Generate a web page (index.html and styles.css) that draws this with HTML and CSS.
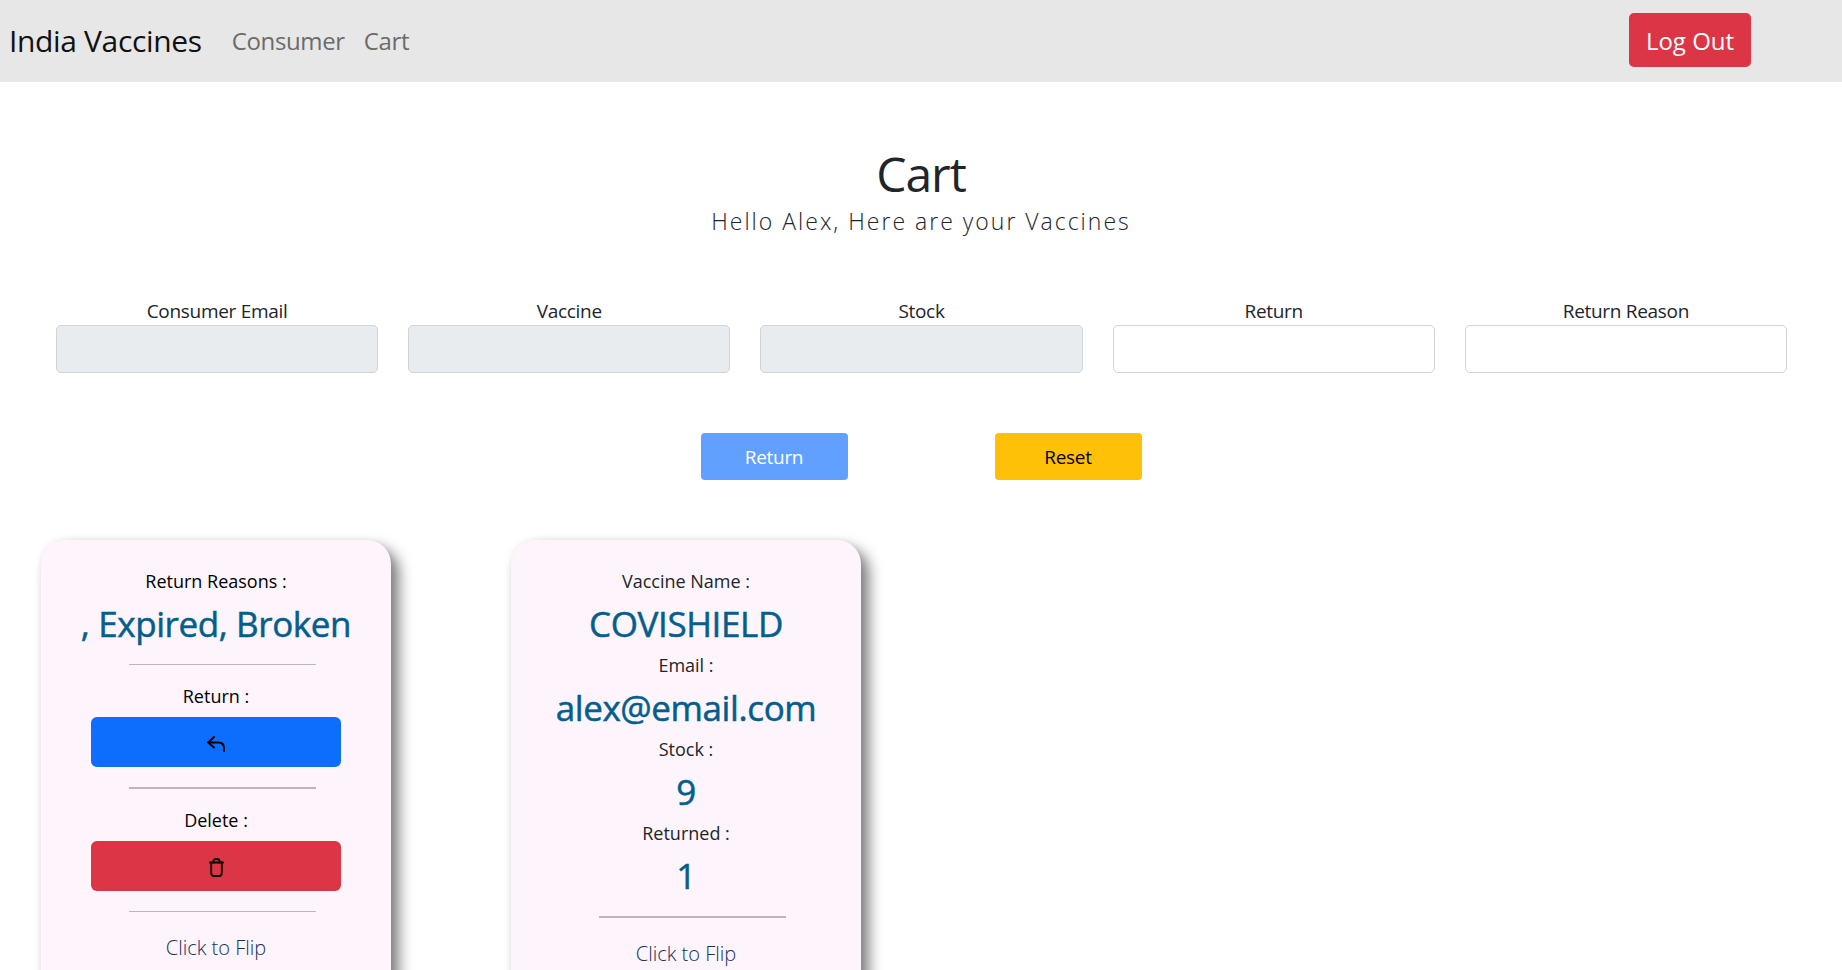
FILE: index.html
```html
<!DOCTYPE html>
<html>
<head>
  <title>India Vaccines</title>
  <link rel="stylesheet" href="styles.css">
</head>
<body>

<nav class="navbar">
  <a class="brand" href="#">India Vaccines</a>
  <a class="nav-link" href="#">Consumer</a>
  <a class="nav-link" href="#">Cart</a>
  <button class="logout">Log Out</button>
</nav>

<h1 class="title">Cart</h1>
<p class="subtitle">Hello Alex, Here are your Vaccines</p>

<form class="return-form">
  <div class="field">
    <label>Consumer Email</label>
    <input type="text" disabled />
  </div>
  <div class="field">
    <label>Vaccine</label>
    <input type="text" disabled />
  </div>
  <div class="field">
    <label>Stock</label>
    <input type="text" disabled />
  </div>
  <div class="field">
    <label>Return</label>
    <input type="text" />
  </div>
  <div class="field">
    <label>Return Reason</label>
    <input type="text" />
  </div>
</form>

<div class="form-buttons">
  <button class="form-btn btn-return">Return</button>
  <button class="form-btn btn-reset">Reset</button>
</div>

<div class="cards">
  <div class="card">
    <p class="card-label label-dark">Return Reasons :</p>
    <p class="card-value">, Expired, Broken</p>
    <hr class="card-line line-first" />
    <p class="card-label label-dark">Return :</p>
    <button class="card-btn card-btn-blue">
      <svg class="icon-return" viewBox="0 0 18 16" fill="none" stroke="#000" stroke-width="1.9" stroke-linecap="round" stroke-linejoin="round">
        <path d="M7 1 L1.2 6.5 L7 11.5" />
        <path d="M1.2 6.5 H11 C15 6.5 17 8.5 17 12 V15.2" />
      </svg>
    </button>
    <hr class="card-line line-thick" />
    <p class="card-label label-dark">Delete :</p>
    <button class="card-btn card-btn-red">
      <svg class="icon-trash" viewBox="0 0 15 19" fill="none" stroke="#000" stroke-width="1.8" stroke-linecap="round" stroke-linejoin="round">
        <path d="M0.9 4.5 H14.1" />
        <path d="M4.5 4.5 V3 C4.5 1.6 5.5 1 7.5 1 C9.5 1 10.5 1.6 10.5 3 V4.5" />
        <path d="M2.2 4.5 V15 C2.2 17 3.2 18 5 18 H10 C11.8 18 12.8 17 12.8 15 V4.5" />
      </svg>
    </button>
    <hr class="card-line" />
    <p class="flip">Click to Flip</p>
  </div>

  <div class="card">
    <p class="card-label">Vaccine Name :</p>
    <p class="card-value">COVISHIELD</p>
    <p class="card-label">Email :</p>
    <p class="card-value">alex@email.com</p>
    <p class="card-label">Stock :</p>
    <p class="card-value">9</p>
    <p class="card-label">Returned :</p>
    <p class="card-value">1</p>
    <hr class="card-line line-thick" />
    <p class="flip">Click to Flip</p>
  </div>
</div>

</body>
</html>
```

FILE: styles.css
```css
html, body {
  height: 970px;
  overflow: hidden;
}

body {
  margin: 0;
  background: #ffffff;
  color: #212529;
  font-family: 'Open Sans', 'Noto Sans', sans-serif;
}

p {
  margin: 0;
}

.navbar {
  display: flex;
  align-items: center;
  height: 82px;
  box-sizing: border-box;
  padding: 0 91px 2px 9px;
  background: #e7e7e7;
}

.brand {
  margin-right: 30px;
  font-size: 30px;
  letter-spacing: -0.35px;
  color: #111;
  text-decoration: none;
}

.nav-link {
  margin-right: 19px;
  font-size: 24px;
  letter-spacing: -0.35px;
  color: #6b6b6b;
  text-decoration: none;
}

.logout {
  margin-left: auto;
  width: 122px;
  height: 54px;
  padding: 0;
  border: none;
  border-radius: 5px;
  background: #dc3545;
  color: #ffffff;
  font-family: inherit;
  font-size: 24px;
  letter-spacing: 0;
}

.title {
  margin: 63px 0 2px;
  font-size: 48px;
  font-weight: 400;
  line-height: 58px;
  letter-spacing: -1px;
  text-align: center;
}

.subtitle {
  font-size: 23px;
  font-weight: 300;
  line-height: 32px;
  letter-spacing: 2px;
  text-align: center;
}

.return-form {
  display: grid;
  grid-template-columns: repeat(5, 1fr);
  gap: 30px;
  margin-top: 62px;
  padding: 0 55px 0 56px;
}

.field {
  text-align: center;
}

.field label {
  display: block;
  height: 26px;
  font-size: 19px;
  line-height: 24px;
  letter-spacing: -0.3px;
}

.field input {
  display: block;
  width: 100%;
  height: 48px;
  box-sizing: border-box;
  border: 1px solid #ced4da;
  border-radius: 5px;
  background: #ffffff;
}

.field input:disabled {
  background: #e9ecef;
}

.form-buttons {
  display: flex;
  justify-content: center;
  gap: 147px;
  margin-top: 60px;
}

.form-btn {
  width: 147px;
  height: 47px;
  padding: 0;
  border: none;
  border-radius: 4px;
  font-family: inherit;
  font-size: 19px;
  letter-spacing: -0.3px;
}

.btn-return {
  background: #62a0ff;
  color: #ffffff;
}

.btn-reset {
  background: #ffc107;
  color: #000000;
}

.cards {
  display: flex;
  gap: 120px;
  margin-top: 60px;
  padding-left: 41px;
}

.card {
  width: 350px;
  height: 460px;
  flex: none;
  box-sizing: border-box;
  padding-top: 26px;
  border-radius: 24px;
  background: #fdf4fc;
  box-shadow: 8px 8px 14px rgba(0, 0, 0, 0.5), 0 0 6px rgba(0, 0, 0, 0.06);
  text-align: center;
}

.card-label {
  height: 30px;
  font-size: 18px;
  line-height: 30px;
  letter-spacing: 0;
  color: #212529;
}

.label-dark {
  color: #000000;
}

.card-value {
  height: 54px;
  font-size: 35px;
  font-weight: 500;
  line-height: 56px;
  letter-spacing: -0.4px;
  color: #025e8d;
  -webkit-text-stroke: 0.5px #025e8d;
}

.card-line {
  width: 187px;
  height: 1px;
  margin: 14px 0 16px 88px;
  border: none;
  background: #bdb5bd;
}

.line-thick {
  height: 2px;
}

.card-btn {
  display: flex;
  align-items: center;
  justify-content: center;
  width: 250px;
  height: 50px;
  margin: 6px 0 20px 50px;
  padding: 3px 0 0;
  border: none;
  border-radius: 6px;
}

.card-btn-blue {
  background: #0d6efd;
}

.card-btn-red {
  background: #dc3545;
}

.card-btn + .card-line {
  margin-top: 0;
}

.icon-return {
  width: 18px;
  height: 16px;
}

.icon-trash {
  width: 15px;
  height: 19px;
}

.flip {
  margin-top: 22px;
  font-size: 20px;
  font-weight: 300;
  letter-spacing: 0;
  color: #14325a;
}
```
